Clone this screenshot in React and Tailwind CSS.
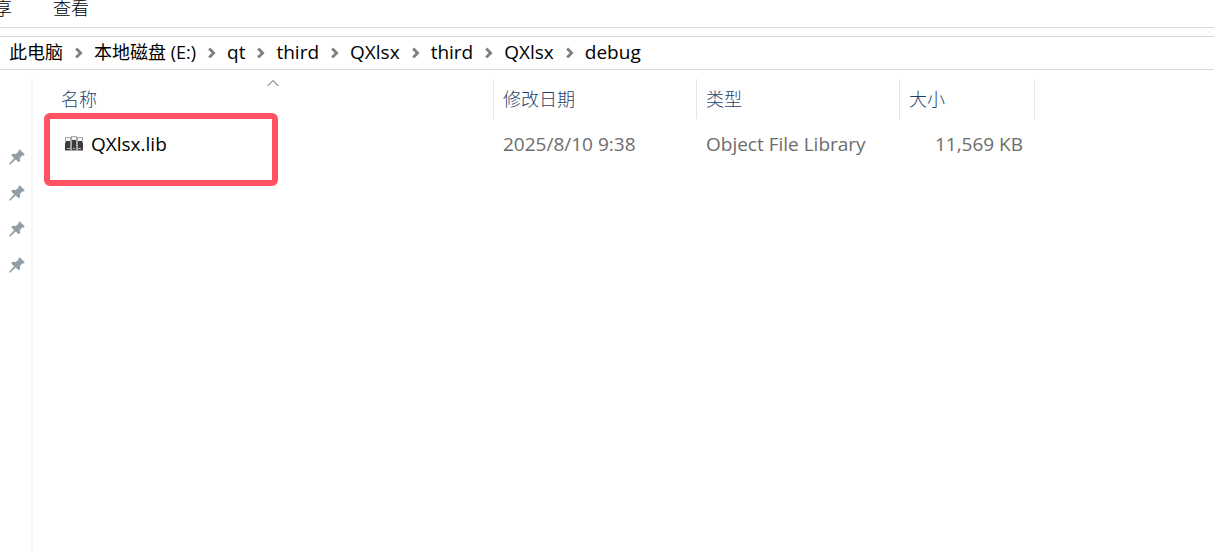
import { Fragment } from 'react';

const crumbs = ['此电脑', '本地磁盘 (E:)', 'qt', 'third', 'QXlsx', 'third', 'QXlsx', 'debug'];

const files = [
  { name: 'QXlsx.lib', modified: '2025/8/10 9:38', type: 'Object File Library', size: '11,569 KB' }
];

const pins = [1, 2, 3, 4];

const Chevron = () => (
  <svg className="w-2 h-3 ml-px shrink-0" viewBox="0 0 8 12" fill="none" stroke="#808080" strokeWidth="2.9">
    <path d="M1.2 2.4 5.6 6.9 1.2 11.4" />
  </svg>
);

const PinIcon = () => (
  <svg className="w-4 h-4" viewBox="0 0 16 16" fill="#929ea5">
    <path d="M10.6 0.3 15.7 5.2 14.6 6.6 13.2 6.4 11 9 11.2 11.8 9.8 13.3 6.6 10.6 1.4 15.6 0.2 15.6 0.2 14.8 5.1 9.2 2.2 6.2 3.6 4.7 6.8 4.9 9.6 2.6 9.4 1.4Z" />
  </svg>
);

const LibraryIcon = () => (
  <svg className="w-[18px] h-4 shrink-0" viewBox="0 0 18 16" shapeRendering="crispEdges">
    <path fill="#a6a6a6" d="M0 1h6v14H0zM6 0h6v15H6zM12 1h6v14h-6z" />
    <path fill="#3c3c3c" d="M1 4h4v10H1zM7 4h4v10H7zM13 4h4v10h-4zM0 7h1v7H0zM17 7h1v7h-1z" />
    <path fill="#f2f2f2" d="M1 2h4v3H1zM7 1h4v3H7zM13 2h4v3h-4z" />
    <path fill="#b8b8b8" d="M2 12h3v1H2zM8 12h2v1H8zM13 12h3v1h-3z" />
  </svg>
);

const SortArrow = () => (
  <svg className="absolute top-0 left-[234px] w-3 h-2" viewBox="0 0 12 8" fill="none" stroke="#555555">
    <path d="M0.6 7 6 1.6 11.4 7" />
  </svg>
);

const App = () => {
  return (
    <div className="flex flex-col min-h-screen overflow-hidden bg-white text-black text-[18px] leading-6 font-['Open_Sans','Noto_Sans_CJK_SC',sans-serif]">
      <nav className="flex items-start gap-[41px] h-7 border-b border-[#dadbdc] text-black font-light leading-4">
        <button className="-ml-1.5">享</button>
        <button>查看</button>
      </nav>

      <nav className="flex items-center gap-[11px] mt-2 h-[34px] pl-[9px] pb-0.5 border-y border-[#d9d9d9]">
        {crumbs.map((crumb, index) => (
          <Fragment key={index}>
            {index > 0 && <Chevron />}
            <a href="#" className={`whitespace-nowrap ${index > 1 ? 'text-[19px]' : 'text-[18px]'}`}>{crumb}</a>
          </Fragment>
        ))}
      </nav>

      <div className="flex flex-1 pt-[9px]">
        <aside className="w-[33px] shrink-0 border-r-2 border-[#f5f5f5]">
          <ul className="flex flex-col gap-5 pt-[70px] pl-[9px]">
            {pins.map((pin) => (
              <li key={pin}><PinIcon /></li>
            ))}
          </ul>
        </aside>

        <main className="relative flex-1">
          <table className="table-fixed w-[1002px] border-separate border-spacing-0 text-left">
            <thead className="text-[#1f3f6b]">
              <tr className="h-10">
                <th className="relative w-[461px] p-0 pl-7 font-light border-r border-[#e5e5e5]">
                  名称
                  <SortArrow />
                </th>
                <th className="w-[203px] p-0 pl-[9px] font-light border-r border-[#e5e5e5]">修改日期</th>
                <th className="w-[203px] p-0 pl-[9px] font-light border-r border-[#e5e5e5]">类型</th>
                <th className="w-[135px] p-0 pl-[9px] font-light border-r border-[#e5e5e5]">大小</th>
              </tr>
            </thead>
            <tbody className="text-[19px] text-[#6d6d6d]">
              {files.map((file) => (
                <tr key={file.name} className="h-[50px]">
                  <td className="p-0 pl-8">
                    <div className="flex items-center gap-2 text-black">
                      <LibraryIcon />
                      {file.name}
                    </div>
                  </td>
                  <td className="p-0 pl-[9px]">{file.modified}</td>
                  <td className="p-0 pl-[9px]">{file.type}</td>
                  <td className="p-0 pr-3 text-right">{file.size}</td>
                </tr>
              ))}
            </tbody>
          </table>

          {/* highlight around the library file */}
          <div className="absolute left-[11px] top-[34px] w-[234px] h-[73px] border-6 border-[#ff5364] rounded-md pointer-events-none"></div>
        </main>
      </div>
    </div>
  );
};

export default App;
